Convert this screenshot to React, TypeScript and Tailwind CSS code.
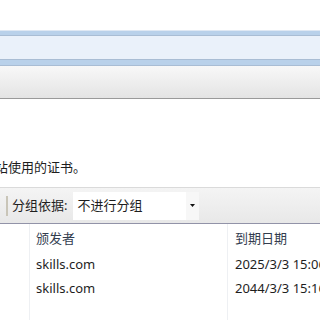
import React from "react";

const font = { fontFamily: '"Noto Sans", "Noto Sans CJK SC", sans-serif' };

function ListRow({ issuer, expires }: { issuer: string; expires: string }) {
  return (
    <div className="flex h-[24px] items-center text-[13px] text-[#1e1e1e]">
      <div className="w-[30px] shrink-0" />
      <div className="w-[198px] shrink-0 pl-[6px]">{issuer}</div>
      <div className="whitespace-nowrap pl-[7px]">{expires}</div>
    </div>
  );
}

export default function App() {
  return (
    <div className="flex h-[320px] w-[320px] flex-col overflow-hidden bg-white" style={font}>
      <div className="h-[30px] shrink-0 bg-white" />
      <div className="h-px shrink-0 bg-[#dfe8f3]" />
      <div className="h-[4px] shrink-0 bg-[#b9d1ea]" />
      <div className="h-px shrink-0 bg-[#a9bdd4]" />
      <div className="h-[23px] shrink-0 bg-[#eaf1fa]" />
      <div className="h-px shrink-0 bg-[#a9bdd4]" />
      <div className="h-[5px] shrink-0 bg-[#b9d1ea]" />
      <div className="h-px shrink-0 bg-[#a9bdd4]" />
      <div className="h-[32px] shrink-0 bg-gradient-to-b from-[#f8f8f8] to-[#e4e4e4]" />
      <div className="h-px shrink-0 bg-[#9a9a9a]" />
      <div className="flex h-[88px] shrink-0 items-end pb-[12px]">
        <p className="-ml-[5px] whitespace-nowrap text-[13px] leading-[16px] text-[#1e1e1e]">站使用的证书。</p>
      </div>
      <div className="h-px shrink-0 bg-[#dadada]" />
      <div className="flex h-[35px] shrink-0 items-center bg-gradient-to-b from-[#f4f4f4] to-[#e8e8e8]">
        <div className="ml-[6px] h-[20px] w-[2px] bg-[#c9c5b8]" />
        <span className="ml-[4px] text-[13px] text-[#1e1e1e]">分组依据:</span>
        <div className="ml-[6px] flex h-[28px] w-[126px] items-center bg-white">
          <span className="flex-1 pl-[4px] text-[13px] text-[#1e1e1e]">不进行分组</span>
          <div className="flex h-full w-[13px] items-center justify-center bg-[#f7f7f7]">
            <svg width="5" height="3" viewBox="0 0 5 3">
              <path d="M0 0h5L2.5 3z" fill="#111" />
            </svg>
          </div>
        </div>
      </div>
      <div className="h-px shrink-0 bg-[#9293a8]" />
      <div className="relative flex-1">
        <div className="absolute bottom-0 left-[29px] top-0 w-px bg-[#eef0f3]" />
        <div className="absolute bottom-0 left-[227px] top-0 w-px bg-[#eef0f3]" />
        <div className="flex h-[29px] items-center text-[13px] text-[#333d4f]">
          <div className="w-[30px] shrink-0" />
          <div className="w-[198px] shrink-0 pl-[6px]">颁发者</div>
          <div className="pl-[7px]">到期日期</div>
        </div>
        <ListRow issuer="skills.com" expires="2025/3/3 15:06" />
        <ListRow issuer="skills.com" expires="2044/3/3 15:16" />
      </div>
    </div>
  );
}
